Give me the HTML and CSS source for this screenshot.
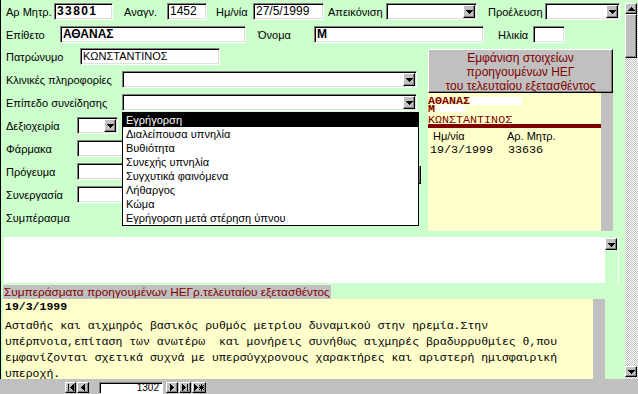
FILE: index.html
```html
<!DOCTYPE html>
<html>
<head>
  <title>Καρτέλα ΗΕΓ</title>
  <link rel="stylesheet" href="styles.css">
</head>
<body>

<div class="window">
  <div class="form">

    <!-- top rows -->
    <div class="row head-row">
      <span class="lbl lbl-armitr">Αρ Μητρ.</span>
      <div class="field bold digits f-armitr">33801</div>
      <span class="lbl lbl-anagn">Αναγν.</span>
      <div class="field f-anagn">1452</div>
      <span class="lbl lbl-date">Ημ/νία</span>
      <div class="field f-date">27/5/1999</div>
      <span class="lbl lbl-apeik">Απεικόνιση</span>
      <div class="combo f-apeik">
        <span class="combo-text"></span>
        <span class="drop-btn"><svg width="7" height="4" viewBox="0 0 7 4"><path d="M0 0h7v1H0zM1 1h5v1H1zM2 2h3v1H2zM3 3h1v1H3z"/></svg></span>
      </div>
      <span class="lbl lbl-proel">Προέλευση</span>
      <div class="combo f-proel">
        <span class="combo-text"></span>
        <span class="drop-btn"><svg width="7" height="4" viewBox="0 0 7 4"><path d="M0 0h7v1H0zM1 1h5v1H1zM2 2h3v1H2zM3 3h1v1H3z"/></svg></span>
      </div>
    </div>

    <div class="row head-row">
      <span class="lbl lbl-epith">Επίθετο</span>
      <div class="field bold f-epith">ΑΘΑΝΑΣ</div>
      <span class="lbl lbl-onoma">Όνομα</span>
      <div class="field bold f-onoma">Μ</div>
      <span class="lbl lbl-ilikia">Ηλικία</span>
      <div class="field f-ilikia"></div>
    </div>

    <div class="body">
      <!-- left column of fields -->
      <div class="left-col">
        <div class="row">
          <span class="lbl lbl-patr">Πατρώνυμο</span>
          <div class="field small f-patr">ΚΩΝΣΤΑΝΤΙΝΟΣ</div>
        </div>
        <div class="row">
          <span class="lbl lbl-long">Κλινικές πληροφορίες</span>
          <div class="combo f-long">
            <span class="combo-text"></span>
            <span class="drop-btn"><svg width="7" height="4" viewBox="0 0 7 4"><path d="M0 0h7v1H0zM1 1h5v1H1zM2 2h3v1H2zM3 3h1v1H3z"/></svg></span>
          </div>
        </div>
        <div class="row">
          <span class="lbl lbl-long">Επίπεδο συνείδησης</span>
          <div class="combo f-long open">
            <span class="combo-text"></span>
            <span class="drop-btn"><svg width="7" height="4" viewBox="0 0 7 4"><path d="M0 0h7v1H0zM1 1h5v1H1zM2 2h3v1H2zM3 3h1v1H3z"/></svg></span>
            <ul class="drop-list">
              <li class="selected">Εγρήγορση</li>
              <li>Διαλείπουσα υπνηλία</li>
              <li>Βυθιότητα</li>
              <li>Συνεχής υπνηλία</li>
              <li>Συγχυτικά φαινόμενα</li>
              <li>Λήθαργος</li>
              <li>Κώμα</li>
              <li>Εγρήγορση μετά στέρηση ύπνου</li>
            </ul>
          </div>
        </div>
        <div class="row">
          <span class="lbl lbl-short">Δεξιοχειρία</span>
          <div class="combo f-deks">
            <span class="combo-text"></span>
            <span class="drop-btn"><svg width="7" height="4" viewBox="0 0 7 4"><path d="M0 0h7v1H0zM1 1h5v1H1zM2 2h3v1H2zM3 3h1v1H3z"/></svg></span>
          </div>
        </div>
        <div class="row">
          <span class="lbl lbl-short">Φάρμακα</span>
          <div class="field f-short"></div>
        </div>
        <div class="row">
          <span class="lbl lbl-short">Πρόγευμα</span>
          <div class="field f-short"></div>
          <span class="peek"></span>
        </div>
        <div class="row">
          <span class="lbl lbl-short">Συνεργασία</span>
          <div class="field f-short"></div>
        </div>
        <div class="row">
          <span class="lbl lbl-short">Συμπέρασμα</span>
        </div>
      </div>

      <!-- previous exams panel -->
      <div class="prev-panel">
        <div class="prev-btn">Εμφάνιση στοιχείων<br>προηγουμένων ΗΕΓ<br>του τελευταίου εξετασθέντος</div>
        <div class="prev-body">
          <div class="prev-main">
            <div class="mono-line bold line-surname">ΑΘΑΝΑΣ<span class="blank blank-surname"></span></div>
            <div class="mono-line bold line-name">Μ<span class="blank blank-name"></span></div>
            <div class="mono-line line-father">ΚΩΝΣΤΑΝΤΙΝΟΣ</div>
            <div class="red-bar"></div>
            <div class="prev-row prev-head">
              <span class="col-date">Ημ/νία</span>
              <span class="col-num">Αρ. Μητρ.</span>
            </div>
            <div class="prev-row prev-data">
              <span class="col-date">19/3/1999</span>
              <span class="col-num">33636</span>
            </div>
          </div>
          <div class="prev-strip"></div>
        </div>
      </div>
    </div>

    <!-- conclusion memo -->
    <div class="memo">
      <div class="memo-text"></div>
      <div class="memo-side">
        <span class="drop-btn memo-btn"><svg width="7" height="4" viewBox="0 0 7 4"><path d="M0 0h7v1H0zM1 1h5v1H1zM2 2h3v1H2zM3 3h1v1H3z"/></svg></span>
      </div>
    </div>

    <div class="prev-title">Συμπεράσματα προηγουμένων ΗΕΓρ.τελευταίου εξετασθέντος</div>

    <div class="prev-notes">
      <div class="notes-main">
        <div class="notes-date">19/3/1999</div>
        <p class="notes-text">Ασταθής και αιχμηρός βασικός ρυθμός μετρίου δυναμικού στην ηρεμία.Στην<br>υπέρπνοια,επίταση των ανωτέρω  και μονήρεις συνήθως αιχμηρές βραδυρρυθμίες θ,που<br>εμφανίζονται σχετικά συχνά με υπερσύγχρονους χαρακτήρες και αριστερή ημισφαιρική<br>υπεροχή.</p>
      </div>
      <div class="notes-strip"></div>
    </div>
  </div>

  <!-- window scrollbar -->
  <div class="vscroll">
    <div class="vs-gap"></div>
    <span class="vs-btn"><svg width="7" height="4" viewBox="0 0 7 4"><path d="M3 0h1v1H3zM2 1h3v1H2zM1 2h5v1H1zM0 3h7v1H0z"/></svg></span>
    <span class="vs-thumb"></span>
    <div class="vs-track"></div>
    <span class="vs-btn"><svg width="7" height="4" viewBox="0 0 7 4"><path d="M0 0h7v1H0zM1 1h5v1H1zM2 2h3v1H2zM3 3h1v1H3z"/></svg></span>
  </div>

  <!-- record navigation -->
  <div class="navbar">
    <span class="nav-btn nav-first"><svg width="6" height="7" viewBox="0 0 6 7"><path d="M0 0h1v7H0zM2 3h1v1H2zM3 2h1v3H3zM4 1h1v5H4zM5 0h1v7H5z"/></svg></span>
    <span class="nav-btn nav-prev"><svg width="4" height="7" viewBox="0 0 4 7"><path d="M0 3h1v1H0zM1 2h1v3H1zM2 1h1v5H2zM3 0h1v7H3z"/></svg></span>
    <span class="nav-num">1302</span>
    <span class="nav-btn nav-next"><svg width="4" height="7" viewBox="0 0 4 7"><path d="M0 0h1v7H0zM1 1h1v5H1zM2 2h1v3H2zM3 3h1v1H3z"/></svg></span>
    <span class="nav-btn nav-last"><svg width="6" height="7" viewBox="0 0 6 7"><path d="M0 0h1v7H0zM1 1h1v5H1zM2 2h1v3H2zM3 3h1v1H3zM5 0h1v7H5z"/></svg></span>
    <span class="nav-btn nav-new"><svg width="10" height="7" viewBox="0 0 10 7"><path d="M0 0h1v7H0zM1 1h1v5H1zM2 2h1v3H2zM3 3h1v1H3zM7 0h1v7H7zM5 3h5v1H5zM5 1h1v1H5zM6 2h1v1H6zM8 4h1v1H8zM9 5h1v1H9zM9 1h1v1H9zM8 2h1v1H8zM6 4h1v1H6zM5 5h1v1H5z"/></svg></span>
  </div>
</div>

</body>
</html>
```

FILE: styles.css
```css
body {
  margin: 0;
  background-color: #fff;
  font-family: "Liberation Sans", Arial, sans-serif;
  font-size: 11px;
  color: #000;
}

.window {
  width: 638px;
  height: 394px;
  display: grid;
  grid-template-columns: 625px 13px;
  grid-template-rows: 379px 15px;
  overflow: hidden;
}

/* green form area */
.form {
  background-color: #ccffcc;
  border-left: 1px solid #000;
  display: flex;
  flex-direction: column;
  padding-top: 3px;
  overflow: hidden;
}

.row {
  display: flex;
  align-items: center;
  height: 17px;
  flex-shrink: 0;
}

.head-row {
  padding-left: 5px;
}

.head-row + .head-row {
  margin-top: 6px;
}

.lbl {
  white-space: nowrap;
  flex-shrink: 0;
}

/* win95 sunken text box */
.field,
.combo {
  height: 17px;
  box-sizing: border-box;
  background-color: #fff;
  border: 1px solid;
  border-color: #808080 #fff #fff #808080;
  box-shadow: inset 1px 1px #000, inset -1px -1px #dfdfdf;
  flex-shrink: 0;
}

.field {
  padding: 0 2px;
  font-size: 12px;
  line-height: 15px;
  white-space: nowrap;
  overflow: hidden;
}

.field.bold {
  font-weight: bold;
  font-size: 12px;
}

.field.digits {
  letter-spacing: 1.4px;
}

.field.small {
  font-size: 11px;
}

.combo {
  display: flex;
  padding: 1px;
  position: relative;
}

.combo-text {
  flex: 1;
}

.drop-btn {
  width: 12px;
  height: 13px;
  box-sizing: border-box;
  background-color: #c0c0c0;
  border: 1px solid;
  border-color: #fff #000 #000 #fff;
  box-shadow: inset -1px -1px #808080;
  display: flex;
  align-items: center;
  justify-content: center;
  flex-shrink: 0;
}

.drop-btn svg {
  display: block;
  margin-top: 1px;
}

/* label and field widths, row 1 */
.lbl-armitr { width: 48px; }
.f-armitr { width: 59px; }
.lbl-anagn { width: 43px; margin-left: 11px; }
.f-anagn { width: 40px; }
.lbl-date { width: 37px; margin-left: 9px; }
.f-date { width: 71px; }
.lbl-apeik { width: 58px; margin-left: 4px; }
.f-apeik { width: 91px; }
.lbl-proel { width: 57px; margin-left: 11px; }
.f-proel { width: 75px; }

/* row 2 */
.lbl-epith { width: 54px; }
.f-epith { width: 186px; }
.lbl-onoma { width: 56px; margin-left: 12px; }
.f-onoma { width: 170px; }
.lbl-ilikia { width: 35px; margin-left: 14px; }
.f-ilikia { width: 32px; }

/* main body: fields + previous exam panel */
.body {
  display: flex;
  margin-top: 5px;
  flex-shrink: 0;
}

.left-col {
  width: 427px;
  box-sizing: border-box;
  padding-left: 5px;
  padding-right: 7px;
  display: flex;
  flex-direction: column;
  gap: 6px;
}

.lbl-patr { width: 74px; }
.f-patr { width: 140px; }
.lbl-long { width: 116px; }
.f-long { width: 295px; }
.lbl-short { width: 71px; }
.f-deks { width: 41px; }
.f-short { width: 60px; }

.peek {
  margin-left: auto;
  margin-top: 6px;
  width: 8px;
  height: 18px;
  box-sizing: border-box;
  background-color: #c0c0c0;
  border-right: 1px solid #000;
  border-bottom: 1px solid #000;
  box-shadow: inset -1px -1px #808080;
}

/* open dropdown list */
.drop-list {
  position: absolute;
  top: 17px;
  left: -1px;
  width: 297px;
  box-sizing: border-box;
  margin: 0;
  padding: 0;
  list-style: none;
  background-color: #fff;
  border: 1px solid #000;
  z-index: 5;
}

.drop-list li {
  height: 14px;
  line-height: 14px;
  padding-left: 3px;
  white-space: nowrap;
}

.drop-list li.selected {
  background-color: #000;
  color: #fff;
}

/* right panel */
.prev-panel {
  width: 185px;
  margin-top: 1px;
  display: flex;
  flex-direction: column;
}

.prev-btn {
  height: 44px;
  box-sizing: border-box;
  background-color: #c0c0c0;
  border: 1px solid;
  border-color: #fff #000 #000 #fff;
  box-shadow: inset -1px -1px #808080;
  color: #800000;
  text-align: center;
  font-size: 12px;
  line-height: 14px;
  padding-top: 1px;
  white-space: nowrap;
}

.prev-body {
  display: flex;
  height: 138px;
}

.prev-main {
  width: 173px;
  background-color: #ffffcc;
  padding-top: 4px;
}

.prev-strip {
  width: 12px;
  background-color: #c0c0c0;
}

.mono-line {
  font-family: "Liberation Mono", "Courier New", monospace;
  font-size: 11.7px;
  color: #800000;
  height: 8px;
  line-height: 8px;
  white-space: nowrap;
  display: flex;
}

.mono-line.bold {
  font-weight: bold;
}

.line-name {
  height: 7px;
}

.line-father {
  margin-top: 4px;
}

.blank {
  display: inline-block;
  background-color: #fff;
}

.blank-surname {
  width: 52px;
  height: 8px;
}

.blank-name {
  width: 28px;
  height: 7px;
  margin-left: 2px;
}

.red-bar {
  height: 4px;
  background-color: #800000;
}

.prev-row {
  display: flex;
  height: 14px;
  line-height: 14px;
}

.prev-head {
  margin-top: 1px;
}

.prev-head .col-date {
  width: 74px;
  padding-left: 5px;
}

.prev-data {
  font-family: "Liberation Mono", "Courier New", monospace;
  font-size: 11.7px;
}

.prev-data .col-date {
  width: 78px;
  padding-left: 2px;
}

/* conclusion memo box */
.memo {
  display: flex;
  margin-top: 6px;
  margin-left: 3px;
  height: 46px;
  flex-shrink: 0;
}

.memo-text {
  width: 601px;
  background-color: #fff;
}

.memo-side {
  width: 14px;
  box-sizing: border-box;
  border-right: 1px solid #fff;
}

.memo-btn {
  height: 12px;
  margin-top: 1px;
}

.prev-title {
  margin-top: 2px;
  margin-left: 2px;
  width: 328px;
  height: 14px;
  line-height: 14px;
  background-color: #c0c0c0;
  color: #800000;
  font-size: 11.8px;
  padding-left: 1px;
  box-sizing: border-box;
  white-space: nowrap;
  flex-shrink: 0;
}

.prev-notes {
  flex: 1;
  display: flex;
  margin-left: 2px;
  width: 602px;
  overflow: hidden;
}

.notes-main {
  width: 590px;
  background-color: #ffffcc;
  padding-left: 2px;
  box-sizing: border-box;
  font-family: "Liberation Mono", "Courier New", monospace;
  font-size: 11.5px;
}

.notes-date {
  font-weight: bold;
  height: 16px;
  line-height: 16px;
}

.notes-text {
  margin: 3px 0 0;
  line-height: 16px;
  white-space: pre;
}

.notes-strip {
  width: 12px;
  background-color: #c0c0c0;
}

/* window scrollbar */
.vscroll {
  display: flex;
  flex-direction: column;
  background-color: #fff;
  background-image: repeating-conic-gradient(#c0c0c0 0 25%, #fff 0 50%);
  background-size: 2px 2px;
  padding-bottom: 2px;
}

.vs-gap {
  height: 3px;
  background-color: #ccffcc;
}

.vs-btn,
.vs-thumb {
  width: 12px;
  box-sizing: border-box;
  background-color: #c0c0c0;
  border: 1px solid;
  border-color: #fff #000 #000 #fff;
  box-shadow: inset -1px -1px #808080;
  display: flex;
  align-items: center;
  justify-content: center;
}

.vs-btn {
  height: 11px;
}

.vs-thumb {
  height: 44px;
}

.vs-track {
  flex: 1;
}

/* record navigation bar */
.navbar {
  grid-column: 1 / 3;
  background-color: #c0c0c0;
  display: flex;
  align-items: flex-start;
  padding-left: 65px;
  padding-top: 3px;
}

.nav-btn {
  height: 11px;
  width: 12px;
  box-sizing: border-box;
  background-color: #c0c0c0;
  border: 1px solid;
  border-color: #fff #000 #000 #fff;
  box-shadow: inset -1px -1px #808080;
  display: flex;
  align-items: center;
  justify-content: center;
  margin-left: 1px;
}

.nav-first {
  width: 11px;
  margin-left: 0;
}

.nav-next {
  margin-left: 3px;
}

.nav-new {
  width: 14px;
}

.nav-num {
  margin-left: 10px;
  width: 64px;
  height: 12px;
  box-sizing: border-box;
  background-color: #fff;
  border: 1px solid;
  border-color: #808080 #fff #fff #808080;
  box-shadow: inset 1px 1px #000;
  font-size: 10px;
  line-height: 10px;
  text-align: right;
  padding-right: 3px;
}
```
